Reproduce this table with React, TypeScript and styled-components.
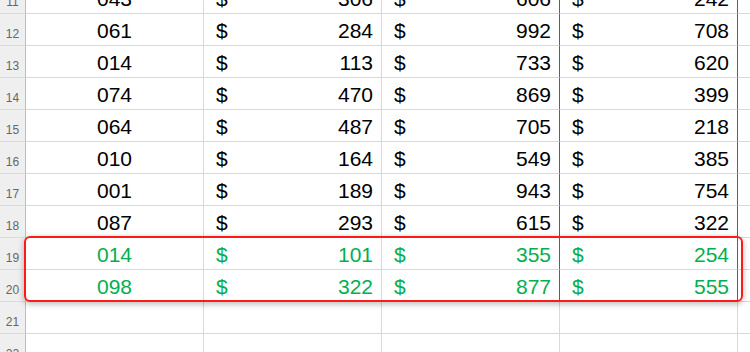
import React from 'react';
import styled, { createGlobalStyle, css } from 'styled-components';

const GlobalStyle = createGlobalStyle`
    html, body {
        margin: 0;
        padding: 0;
        background: #ffffff;
        overflow: hidden;
    }
`;

type RowData = {
    num: number;
    id: string;
    values: string[];
    highlight?: boolean;
};

const rows: RowData[] = [
    { num: 11, id: '043', values: ['306', '606', '242'] },
    { num: 12, id: '061', values: ['284', '992', '708'] },
    { num: 13, id: '014', values: ['113', '733', '620'] },
    { num: 14, id: '074', values: ['470', '869', '399'] },
    { num: 15, id: '064', values: ['487', '705', '218'] },
    { num: 16, id: '010', values: ['164', '549', '385'] },
    { num: 17, id: '001', values: ['189', '943', '754'] },
    { num: 18, id: '087', values: ['293', '615', '322'] },
    { num: 19, id: '014', values: ['101', '355', '254'], highlight: true },
    { num: 20, id: '098', values: ['322', '877', '555'], highlight: true },
];

const Sheet = styled.div`
    position: relative;
    width: 750px;
    height: 352px;
    overflow: hidden;
    font-family: "Liberation Sans", Arial, sans-serif;
`;

const Row = styled.div<{ $height: number }>`
    display: grid;
    grid-template-columns: 26px 178px 178px 178px 178px 1fr;
    height: ${(p) => p.$height}px;
    overflow: hidden;
`;

const RowHeader = styled.div`
    display: flex;
    align-items: flex-end;
    justify-content: center;
    padding-bottom: 4px;
    box-sizing: border-box;
    background: #efefef;
    border-right: 1px solid #bdbdbd;
    border-bottom: 1px solid #dcdcdc;
    color: #666666;
    font-size: 12px;
    line-height: 14px;
    overflow: hidden;
`;

const Cell = styled.div<{ $green?: boolean; $center?: boolean; $selected?: boolean }>`
    display: flex;
    align-items: flex-end;
    justify-content: ${(p) => (p.$center ? 'center' : 'space-between')};
    box-sizing: border-box;
    padding: 0 8px 2px 12px;
    border-right: 1px solid #d9d9d9;
    border-bottom: 1px solid #d9d9d9;
    font-size: 21px;
    line-height: 24px;
    color: ${(p) => (p.$green ? '#00b050' : '#000000')};
    overflow: hidden;
    white-space: nowrap;

    ${(p) => p.$center && css`
        padding: 0 0 2px 0;
    `}

    ${(p) => p.$selected && css`
        border-right-color: #3a62b5;
    `}
`;

const Highlight = styled.div`
    position: absolute;
    left: 24px;
    top: 236px;
    width: 719px;
    height: 66px;
    box-sizing: border-box;
    border: 2px solid #ff1a1a;
    border-radius: 6px;
    box-shadow: 0 2px 6px rgba(0, 0, 0, 0.28);
    pointer-events: none;
`;

const Money = ({ value, green, selected }: { value: string; green?: boolean; selected?: boolean }) => (
    <Cell $green={green} $selected={selected}>
        <span>$</span>
        <span>{value}</span>
    </Cell>
);

const App = () => {
    return (
        <>
            <GlobalStyle />
            <Sheet>
                {rows.map((r, i) => (
                    <Row key={r.num} $height={i === 0 ? 14 : 32}>
                        <RowHeader>{r.num}</RowHeader>
                        <Cell $center $green={r.highlight}>{r.id}</Cell>
                        <Money value={r.values[0]} green={r.highlight} />
                        <Money value={r.values[1]} green={r.highlight} selected />
                        <Money value={r.values[2]} green={r.highlight} selected />
                        <Cell />
                    </Row>
                ))}
                {[21, 22].map((n) => (
                    <Row key={n} $height={32}>
                        <RowHeader>{n}</RowHeader>
                        <Cell />
                        <Cell />
                        <Cell />
                        <Cell />
                        <Cell />
                    </Row>
                ))}
                <Highlight />
            </Sheet>
        </>
    );
};

export default App;
